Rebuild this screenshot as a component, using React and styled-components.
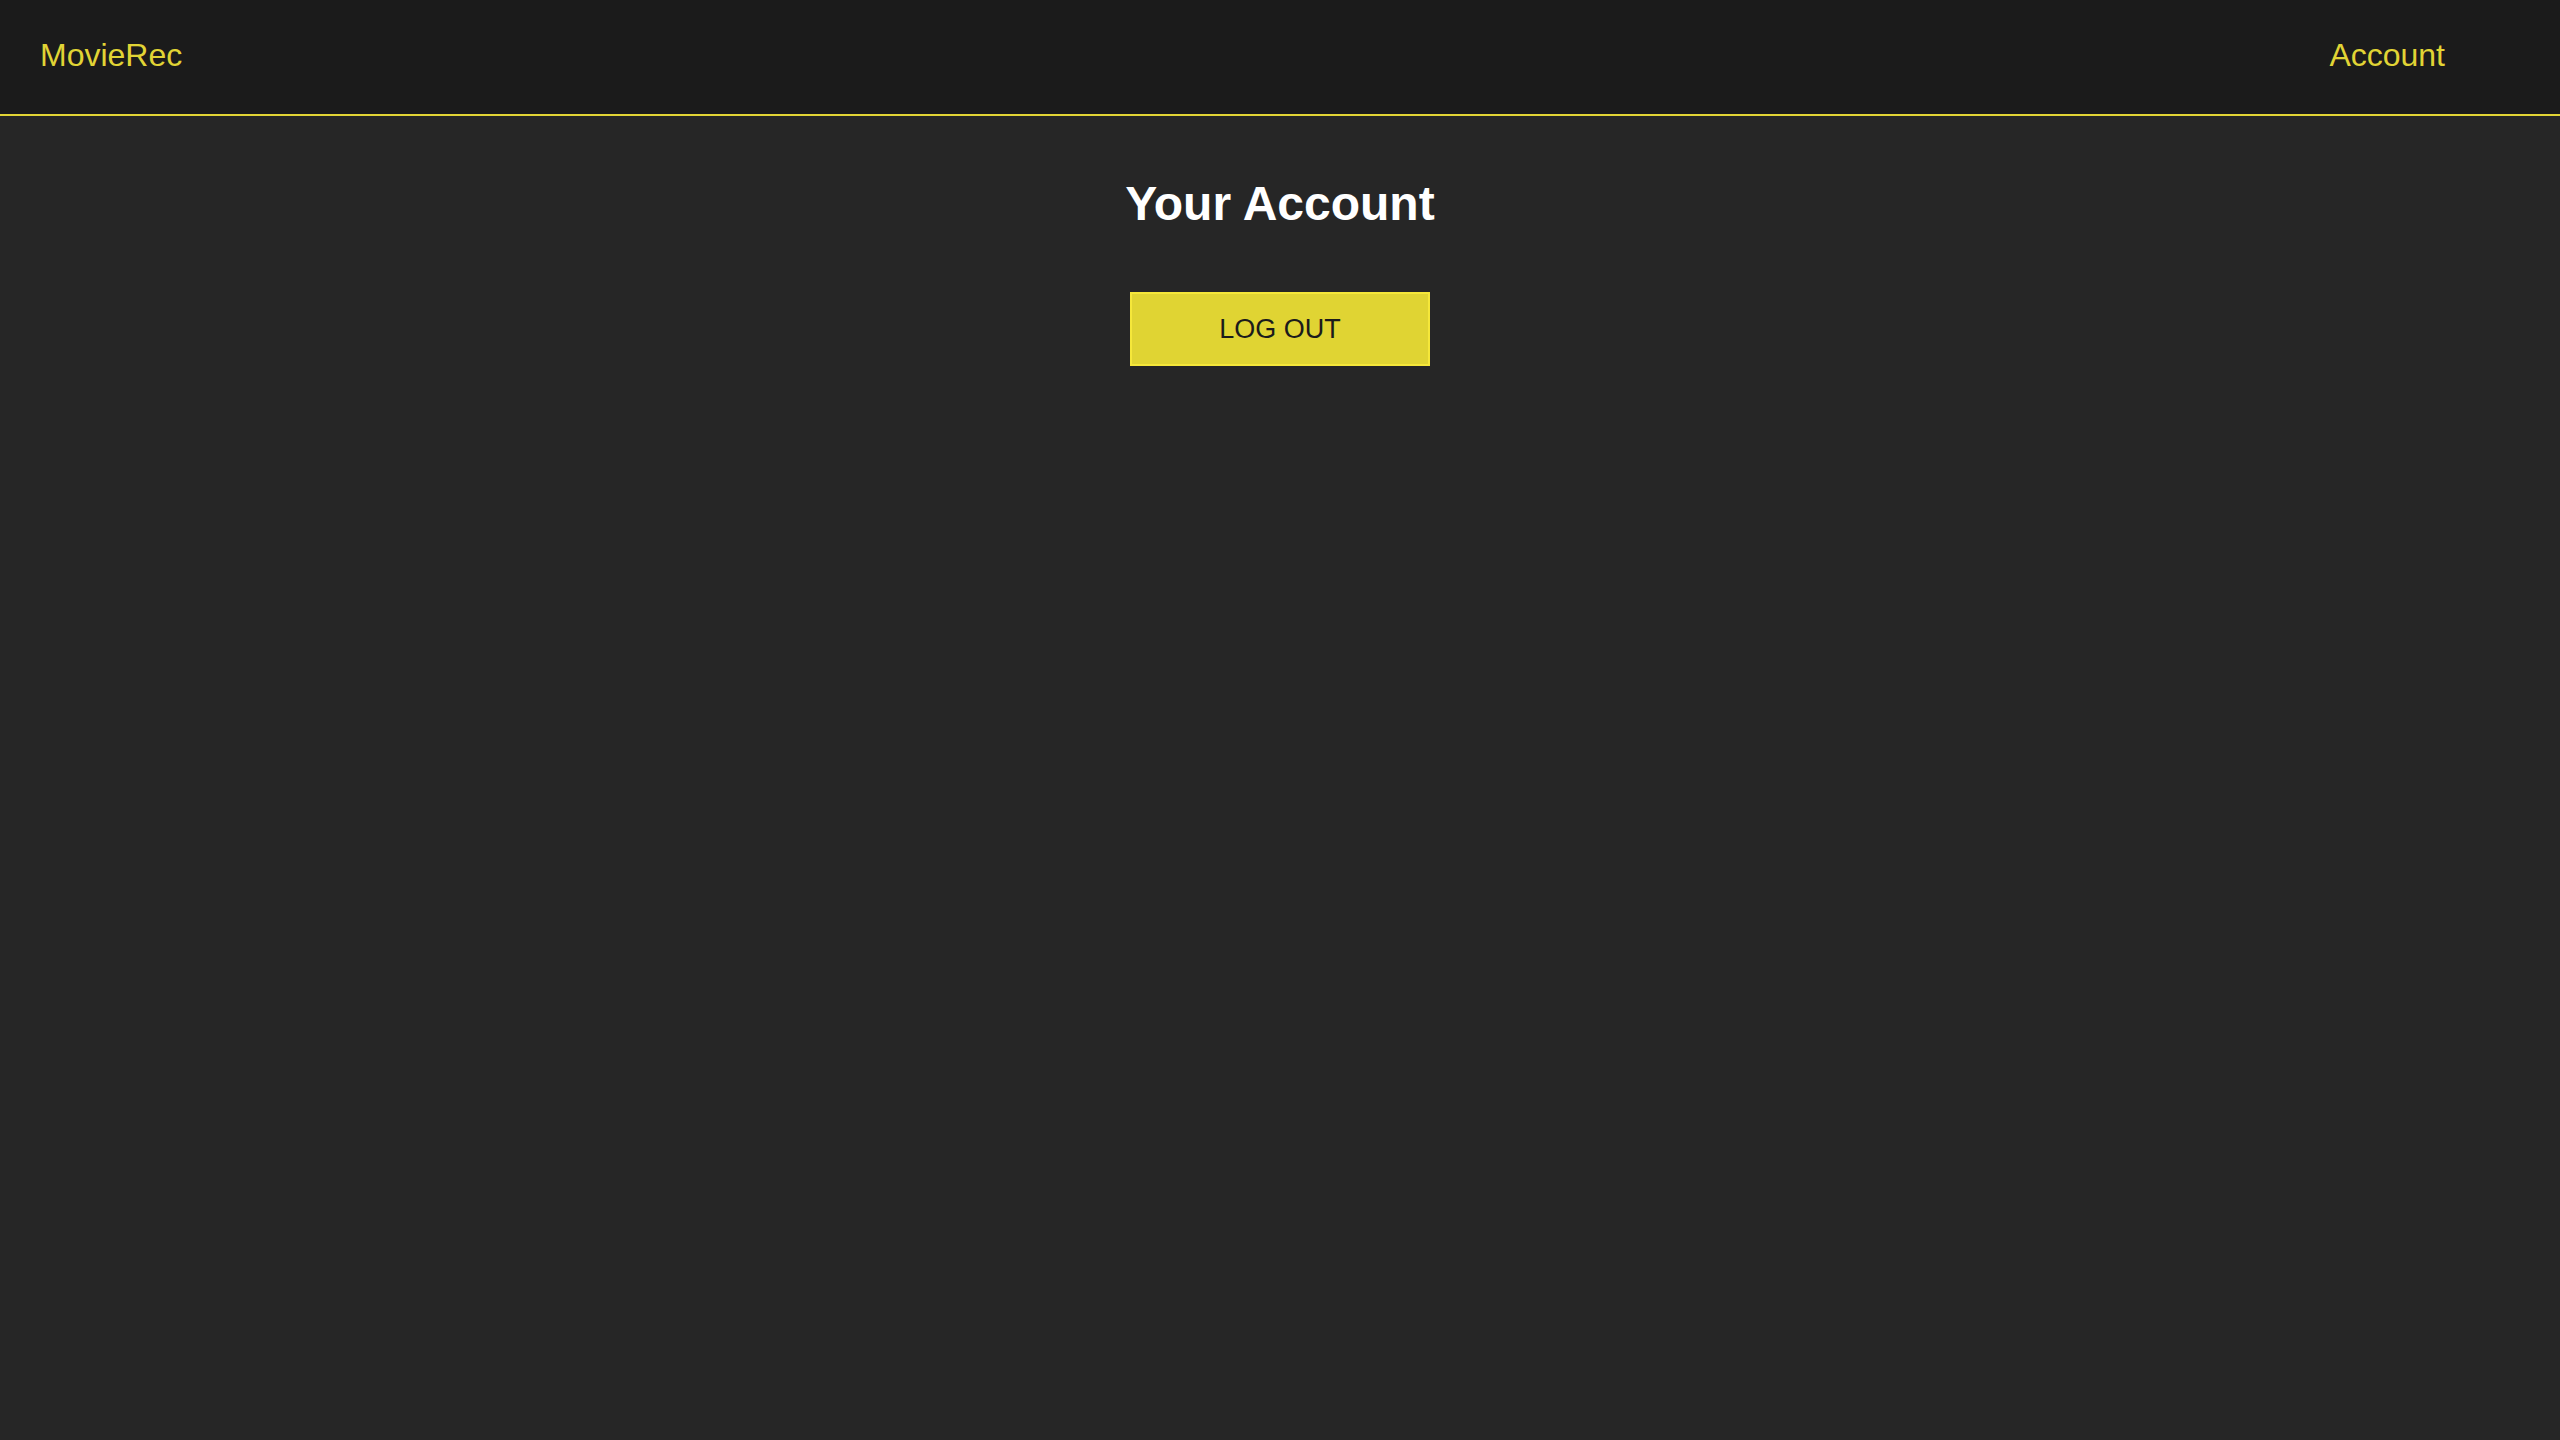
import React from 'react';
import styled, { createGlobalStyle } from 'styled-components';

const GlobalStyle = createGlobalStyle`
  html, body {
    margin: 0;
    padding: 0;
    background: #262626;
    font-family: 'Liberation Sans', Arial, sans-serif;
  }
`;

const Page = styled.div`
  min-height: 100vh;
  background: #262626;
`;

const NavBar = styled.header`
  height: 114px;
  box-sizing: content-box;
  background: #1b1b1b;
  border-bottom: 2px solid #e1d435;
  display: flex;
  align-items: center;
  justify-content: space-between;
  padding: 0 115px 0 40px;
`;

const NavLink = styled.a`
  color: #e1d435;
  font-size: 32px;
  text-decoration: none;
  cursor: pointer;
  margin-top: -4px;
`;

const Main = styled.main`
  display: flex;
  flex-direction: column;
  align-items: center;
  padding-top: 60px;
`;

const Title = styled.h1`
  margin: 0;
  color: #ffffff;
  font-size: 48px;
  font-weight: 700;
`;

const LogoutButton = styled.button`
  margin-top: 61px;
  width: 300px;
  height: 74px;
  background: #e0d433;
  border: 2px solid #f5e73a;
  color: #1b1b1b;
  font-family: 'Liberation Sans', Arial, sans-serif;
  font-size: 27px;
  cursor: pointer;
`;

const App = () => (
  <>
    <GlobalStyle />
    <Page>
      <NavBar>
        <NavLink>MovieRec</NavLink>
        <NavLink>Account</NavLink>
      </NavBar>
      <Main>
        <Title>Your Account</Title>
        <LogoutButton>LOG OUT</LogoutButton>
      </Main>
    </Page>
  </>
);

export default App;
